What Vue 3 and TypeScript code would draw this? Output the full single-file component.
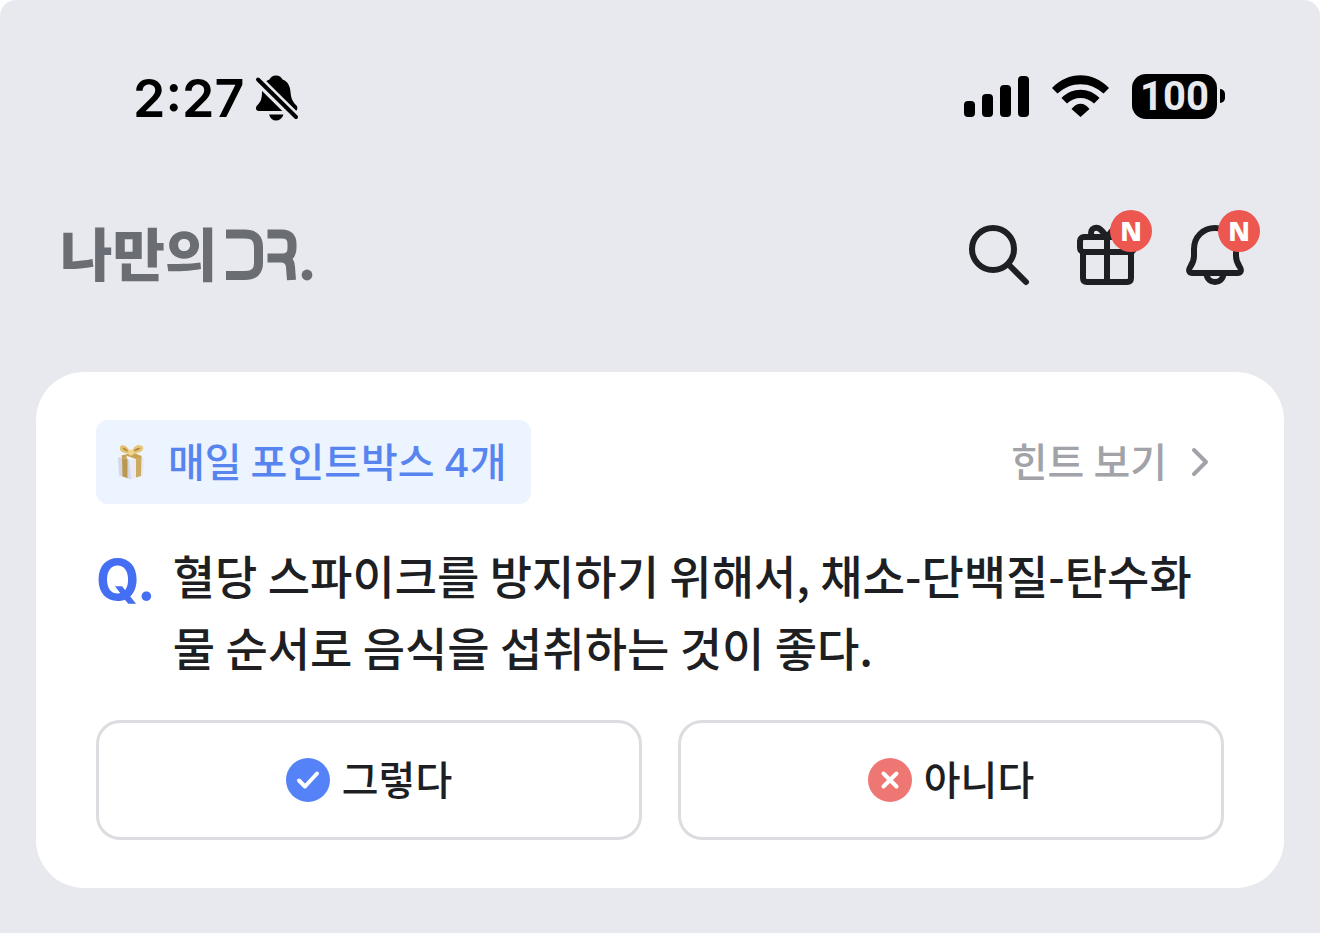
<script setup lang="ts">
import { ref } from 'vue'

type AnswerKey = 'yes' | 'no'

interface Answer {
  key: AnswerKey
  label: string
  mark: string
}

const answers: Answer[] = [
  { key: 'yes', label: '그렇다', mark: 'M13 22.500 L19 28.500 L31 15.500' },
  { key: 'no', label: '아니다', mark: 'M15.500 15.500 L28.500 28.500 M28.500 15.500 L15.500 28.500' },
]

const selected = ref<AnswerKey | null>(null)
const boxCount = ref<number>(4)
const signalBars: number[] = [16, 23, 32, 41]
</script>

<template>
  <div class="screen">
    <div class="status">
      <div class="status-side">
        <span class="clock">2:27</span>
        <svg class="muted" width="44" height="47" viewBox="0 0 44 47" aria-hidden="true">
          <path d="M21 0.5C24.500 0.500 26.500 2.500 27.500 4.500C33 6.500 35 11 35.500 17C36 24 38 27 41.500 30.500C43 32.500 42.500 36 40 36H4C1 36 0 33 2 30.500C5 27.500 7 25 7 17C7 10 9.500 6.500 14.500 4.500C15.500 2.500 17.500 0.500 21 0.500Z" />
          <path d="M14 39.500H28.500C27 43.500 24.500 45.500 21 45.500S15.500 43.500 14 39.500Z" />
          <path class="slash-gap" d="M0 2L43 44.500" />
          <path class="slash" d="M3 4.500L41 42" />
        </svg>
      </div>
      <div class="status-side indicators">
        <div class="signal">
          <i v-for="h in signalBars" :key="h" :style="{ height: h + 'px' }"></i>
        </div>
        <svg width="59" height="43" viewBox="0 0 59 43" aria-hidden="true">
          <path d="M1 13C17 -4 42 -4 58 13L52.500 18.500C39 6 20 6 6.500 18.500Z" />
          <path d="M10.500 23C21 12 38 12 48.500 23L43 28.500C36 21 23 21 16 28.500Z" />
          <path d="M20.500 34C26 27 33 27 38.500 34L29.500 42Z" />
        </svg>
        <div class="battery">
          <span class="level">100</span>
          <i class="nub"></i>
        </div>
      </div>
    </div>

    <header class="header">
      <a class="brand" href="#" aria-label="나만의 DR.">
        <span class="brand-name">나만의</span>
        <svg width="92" height="56" viewBox="0 0 92 56" aria-hidden="true">
          <path class="mark" d="M3 7H22Q35.500 7 35.500 20V36Q35.500 48.500 22 48.500H3" />
          <path class="mark" d="M44.500 7H59Q69 7 69 17V21Q69 31 59 31H44.500M58 31Q67 31 67.500 40L68.500 53" />
          <circle cx="84" cy="48" r="5.400" />
        </svg>
      </a>
      <nav class="actions">
        <button type="button" class="action" aria-label="검색">
          <svg viewBox="0 0 72 72" aria-hidden="true">
            <circle cx="30" cy="30" r="21" />
            <path d="M45 45L63 63" />
          </svg>
        </button>
        <button type="button" class="action" aria-label="선물">
          <svg viewBox="0 0 72 72" aria-hidden="true">
            <path d="M12 33V59Q12 63 16 63H56Q60 63 60 59V33" />
            <rect x="9" y="18" width="54" height="15" rx="4" />
            <path d="M36 18V63" />
            <path d="M20.500 17C18 9 26 6 31 12L36 18L41 12C46 6 54 9 51.500 17" />
          </svg>
          <span class="badge">N</span>
        </button>
        <button type="button" class="action" aria-label="알림">
          <svg viewBox="0 0 72 72" aria-hidden="true">
            <path d="M36 9C24 9 15 18 15 30V37C15 42 13.500 44.500 11.500 47.500C9 51 10 54 13.500 54H58.500C62 54 63 51 60.500 47.500C58.500 44.500 57 42 57 37V30C57 18 48 9 36 9Z" />
            <path d="M27.500 55C28 60 32 63 36 63S44 60 44.500 55" />
          </svg>
          <span class="badge">N</span>
        </button>
      </nav>
    </header>

    <main class="card">
      <div class="card-top">
        <div class="chip">
          <svg width="30" height="36" viewBox="0 0 30 36" aria-hidden="true">
            <path fill="#d6d7e4" d="M2 12L15 14V35.500L3 31.500Z" />
            <path fill="#e9eaf3" d="M13 14L28 12L27 31.500L15 35.500Z" />
            <path fill="#bb9750" d="M6 12.500L11.500 13.500V34L6.500 32.500Z" />
            <path fill="#ccaa62" d="M20 13.500L25.500 12.500L25 32L20 33.500Z" />
            <path fill="#f3f3f8" d="M1.500 11L15 8L28.500 11V13L15 16L1.500 13Z" />
            <path fill="#c9a354" d="M5.500 11.500L17 8.500L25.500 12V14L20 15L10 11.500L11.500 15L6 14Z" />
            <path fill="#e3c274" d="M15 9.500C11 0 5 0 4 3C2.500 7 8 10 15 9.500Z" />
            <path fill="#e7c97e" d="M15 9.500C18 -1 25 0 27 3C28.500 7 22 10 15 9.500Z" />
            <path fill="#b88e3e" d="M13 7.500C10 4 8 3 6.500 4C7 6 9 7 13 7.500ZM17 7.500C19 4 22 3 24.500 4C24 6 21 7 17 7.500Z" />
            <circle fill="#f0d58f" cx="15" cy="8.500" r="3" />
          </svg>
          <span class="label">매일 포인트박스 <span class="num">{{ boxCount }}</span>개</span>
        </div>
        <a class="hint" href="#">
          <span class="label">힌트 보기</span>
          <svg width="20" height="32" viewBox="0 0 20 32" aria-hidden="true">
            <path d="M3 4L15 16L3 28" />
          </svg>
        </a>
      </div>

      <div class="question">
        <span class="q">Q.</span>
        <p>혈당 스파이크를 방지하기 위해서, 채소-단백질-탄수화물 순서로 음식을 섭취하는 것이 좋다.</p>
      </div>

      <div class="answers">
        <button
          v-for="a in answers"
          :key="a.key"
          type="button"
          class="answer"
          :aria-pressed="selected === a.key"
          @click="selected = a.key"
        >
          <svg :class="a.key" width="44" height="44" viewBox="0 0 44 44" aria-hidden="true">
            <circle cx="22" cy="22" r="22" />
            <path :d="a.mark" />
          </svg>
          <span class="label">{{ a.label }}</span>
        </button>
      </div>
    </main>
  </div>
</template>

<style>
body {
  margin: 0;
  background: #fff;
}
</style>

<style scoped>
.screen {
  box-sizing: border-box;
  min-height: 100vh;
  padding: 60px 36px 44px;
  border-radius: 16px 16px 0 0;
  background: #e8e9ee;
  color: #1e1f23;
  font-family: "Noto Sans CJK KR", "Noto Sans", sans-serif;
  font-weight: 500;
}
button {
  font: inherit;
  color: inherit;
  cursor: pointer;
}
a {
  text-decoration: none;
}
svg {
  display: block;
  flex: none;
}
.status {
  display: flex;
  align-items: center;
  justify-content: space-between;
  height: 72px;
  padding: 0 59px 0 97px;
  color: #000;
}
.status-side {
  display: flex;
  align-items: center;
  gap: 11px;
  padding-top: 4px;
}
.clock {
  padding-top: 2px;
  font: 600 52px/64px Inter, sans-serif;
}
.slash-gap {
  fill: none;
  stroke: #e8e9ee;
  stroke-width: 10;
}
.slash {
  fill: none;
  stroke: #000;
  stroke-width: 4;
  stroke-linecap: round;
}
.indicators {
  gap: 22px;
  padding-top: 0;
}
.signal {
  display: flex;
  align-items: flex-end;
  gap: 7px;
}
.signal i {
  width: 11px;
  border-radius: 4px;
  background: #000;
}
.battery {
  display: flex;
  align-items: center;
  gap: 3px;
}
.level {
  width: 85px;
  border-radius: 14px;
  background: #000;
  color: #e8e9ee;
  font: 700 40px/45px Roboto, sans-serif;
  text-align: center;
}
.nub {
  width: 5px;
  height: 14px;
  border-radius: 0 5px 5px 0;
  background: #000;
}
.header {
  display: flex;
  align-items: center;
  justify-content: space-between;
  padding: 87px 33px 81px 24px;
}
.brand {
  display: flex;
  align-items: center;
  gap: 6px;
  color: #6b6d74;
}
.brand-name {
  padding-bottom: 8px;
  font-size: 57px;
  font-weight: 900;
  line-height: 60px;
}
.brand svg {
  fill: currentColor;
}
.brand .mark {
  fill: none;
  stroke: currentColor;
  stroke-width: 9;
}
.actions {
  display: flex;
  gap: 36px;
}
.action {
  position: relative;
  width: 72px;
  height: 72px;
  padding: 0;
  border: 0;
  background: none;
}
.action svg {
  fill: none;
  stroke: #1e1f23;
  stroke-width: 6;
  stroke-linecap: round;
  stroke-linejoin: round;
}
.badge {
  position: absolute;
  top: -9px;
  right: -9px;
  width: 42px;
  border-radius: 50%;
  background: #ec5750;
  color: #fff;
  font: 800 26px/42px "Open Sans", sans-serif;
  text-align: center;
}
.card {
  padding: 48px 60px;
  border-radius: 48px;
  background: #fff;
}
.card-top {
  display: flex;
  align-items: center;
  justify-content: space-between;
  font-size: 40px;
}
.label {
  padding-bottom: 4px;
}
.chip {
  display: flex;
  align-items: center;
  gap: 22px;
  height: 84px;
  padding: 0 24px 0 20px;
  border-radius: 12px;
  background: #ebf4ff;
  color: #5784ee;
}
.num {
  font-family: Inter, sans-serif;
}
.hint {
  display: flex;
  align-items: center;
  gap: 24px;
  padding-right: 13px;
  color: #a2a3a9;
}
.hint path {
  fill: none;
  stroke: currentColor;
  stroke-width: 4;
  stroke-linecap: round;
  stroke-linejoin: round;
}
.question {
  display: flex;
  gap: 17px;
  padding: 34px 0 38px;
}
.q {
  padding-top: 2px;
  color: #456ff3;
  font: 700 56px/80px Inter, sans-serif;
}
.question p {
  flex: 1;
  margin: 0;
  font-size: 46px;
  line-height: 72px;
}
.answers {
  display: grid;
  grid-template-columns: 1fr 1fr;
  gap: 36px;
}
.answer {
  display: flex;
  align-items: center;
  justify-content: center;
  gap: 12px;
  height: 120px;
  padding: 0;
  border: 3px solid #dcdde1;
  border-radius: 24px;
  background: #fff;
  font-size: 40px;
}
.answer path {
  fill: none;
  stroke: #fff;
  stroke-width: 4;
  stroke-linecap: round;
  stroke-linejoin: round;
}
.yes {
  fill: #5582f6;
}
.no {
  fill: #ee7774;
}
</style>
